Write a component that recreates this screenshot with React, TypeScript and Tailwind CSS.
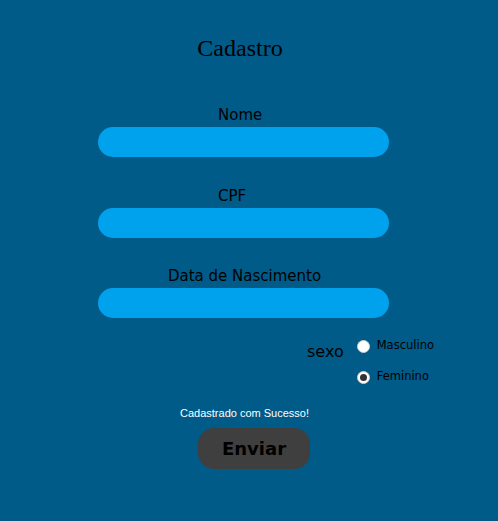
import { useState } from 'react';

const labelFont = { fontFamily: '"DejaVu Sans", Verdana, sans-serif' };

function Field({ label, indent, className = '' }: { label: string; indent: string; className?: string }) {
  return (
    <div className={`flex flex-col ${className}`}>
      <label className={`${indent} text-[15px] leading-[18px] text-black`} style={labelFont}>
        {label}
      </label>
      <input
        type="text"
        className="mt-[3px] h-[30px] w-[291px] rounded-[15px] bg-[#00a2ee] outline-none px-4"
      />
    </div>
  );
}

function Radio({ label, checked, onClick }: { label: string; checked: boolean; onClick: () => void }) {
  return (
    <button type="button" onClick={onClick} className="flex items-center gap-[7px] h-[18px]">
      <span className="flex h-[13px] w-[13px] items-center justify-center rounded-full bg-white border border-[#d0d0d0]">
        {checked && <span className="h-[7px] w-[7px] rounded-full bg-[#333]" />}
      </span>
      <span className="text-[11.5px] text-black" style={labelFont}>
        {label}
      </span>
    </button>
  );
}

export default function App() {
  const [sexo, setSexo] = useState('F');

  return (
    <div className="min-h-[521px] w-full bg-[#005b88]">
      <div className="ml-[98px] w-[291px] pt-[34px] flex flex-col">
        <h1
          className="text-center pr-[7px] text-[24px] leading-[28px] text-black"
          style={{ fontFamily: '"Liberation Serif", "Times New Roman", serif' }}
        >
          Cadastro
        </h1>

        <div className="mt-[44px] flex flex-col">
          <Field label="Nome" indent="pl-[120px]" />
          <Field label="CPF" indent="pl-[120px]" className="mt-[30px]" />
          <Field label="Data de Nascimento" indent="pl-[70px]" className="mt-[29px]" />
        </div>

        <div className="mt-[19px] ml-[209px] flex">
          <span className="mt-[5px] text-[16px] leading-[20px] text-black" style={labelFont}>
            sexo
          </span>
          <div className="ml-[13px] flex flex-col gap-[13px]">
            <Radio label="Masculino" checked={sexo === 'M'} onClick={() => setSexo('M')} />
            <Radio label="Feminino" checked={sexo === 'F'} onClick={() => setSexo('F')} />
          </div>
        </div>

        <p
          className="mt-[20px] ml-[82px] text-[11px] leading-[14px] text-white"
          style={{ fontFamily: '"Liberation Sans", Arial, sans-serif' }}
        >
          Cadastrado com Sucesso!
        </p>

        <button
          type="submit"
          className="mt-[8px] ml-[100px] h-[41px] w-[112px] rounded-[16px] bg-[#3f3f3f] text-[18px] font-bold text-black"
          style={labelFont}
        >
          Enviar
        </button>
      </div>
    </div>
  );
}
